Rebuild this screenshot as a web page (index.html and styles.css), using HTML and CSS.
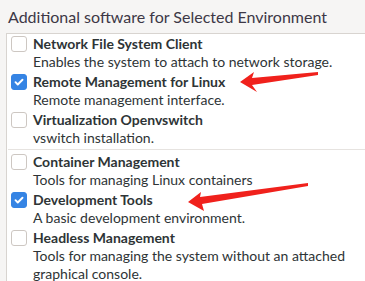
FILE: index.html
```html
<!DOCTYPE html>
<html lang="en">
<head>
  <meta charset="UTF-8">
  <title>Software Selection</title>
  <link rel="stylesheet" href="styles.css">
</head>
<body>
  <div class="panel">
    <!-- Header -->
    <h2 class="heading">Additional software for Selected Environment</h2>

    <div class="addon-box">
      <!-- Environment-specific add-ons -->
      <div class="addon-group">
        <div class="addon">
          <span class="check"></span>
          <div class="addon-text">
            <div class="addon-name">Network File System Client</div>
            <div class="addon-desc">Enables the system to attach to network storage.</div>
          </div>
        </div>
        <div class="addon">
          <span class="check checked"><svg viewBox="0 0 16 16"><path d="M4 8.2l2.6 2.6L12 5.4" /></svg></span>
          <div class="addon-text">
            <div class="addon-name">Remote Management for Linux</div>
            <div class="addon-desc">Remote management interface.</div>
          </div>
        </div>
        <div class="addon">
          <span class="check"></span>
          <div class="addon-text">
            <div class="addon-name">Virtualization Openvswitch</div>
            <div class="addon-desc">vswitch installation.</div>
          </div>
        </div>
      </div>

      <!-- Common add-ons -->
      <div class="addon-group">
        <div class="addon">
          <span class="check"></span>
          <div class="addon-text">
            <div class="addon-name">Container Management</div>
            <div class="addon-desc">Tools for managing Linux containers</div>
          </div>
        </div>
        <div class="addon">
          <span class="check checked"><svg viewBox="0 0 16 16"><path d="M4 8.2l2.6 2.6L12 5.4" /></svg></span>
          <div class="addon-text">
            <div class="addon-name">Development Tools</div>
            <div class="addon-desc">A basic development environment.</div>
          </div>
        </div>
        <div class="addon">
          <span class="check"></span>
          <div class="addon-text">
            <div class="addon-name">Headless Management</div>
            <div class="addon-desc">Tools for managing the system without an attached graphical console.</div>
          </div>
        </div>
      </div>
    </div>

    <!-- Annotation arrows -->
    <svg class="arrows" viewBox="0 0 365 281">
      <path d="M240 82 L254 72 L252 78 L318 72 L318 75 L252 85 L257 92 Z" />
      <path d="M188 202 L201 192 L200 197 L308 183 L308 186 L202 204 L204 211 Z" />
    </svg>
  </div>
</body>
</html>
```

FILE: styles.css
```css
* {
  box-sizing: border-box;
  margin: 0;
  padding: 0;
}

body {
  font-family: 'Lato', sans-serif;
  background-color: #f6f5f4;
  color: #2e3436;
  overflow: hidden;
}

.panel {
  position: relative;
  height: 281px;
}

.heading {
  font-size: 16px;
  font-weight: normal;
  color: #3d3846;
  padding: 6px 8px 6px;
  line-height: 21px;
}

.addon-box {
  margin-left: 6px;
  background-color: #ffffff;
  border-top: 1px solid #d8d4d0;
  border-left: 1px solid #d8d4d0;
  padding-top: 1px;
}

.addon-group + .addon-group {
  border-top: 1px solid #e6e3e0;
  margin-left: 1px;
  padding-top: 3px;
}

.addon-group + .addon-group .addon {
  padding-left: 3px;
}

.addon {
  display: flex;
  gap: 6px;
  padding: 0 4px 2px 4px;
  font-size: 14px;
  line-height: 18px;
}

.check {
  flex: none;
  width: 16px;
  height: 16px;
  margin-top: 1px;
  border: 1px solid #cdc7c2;
  border-radius: 3px;
  background-color: #ffffff;
}

.check.checked {
  background-color: #3584e4;
  border-color: #3584e4;
}

.check svg {
  display: block;
  width: 14px;
  height: 14px;
}

.check path {
  fill: none;
  stroke: #ffffff;
  stroke-width: 2.2;
  stroke-linecap: round;
  stroke-linejoin: round;
}

.addon-name {
  font-weight: bold;
}

.arrows {
  position: absolute;
  left: 0;
  top: 0;
  width: 365px;
  height: 281px;
  fill: #f0211c;
}
```
